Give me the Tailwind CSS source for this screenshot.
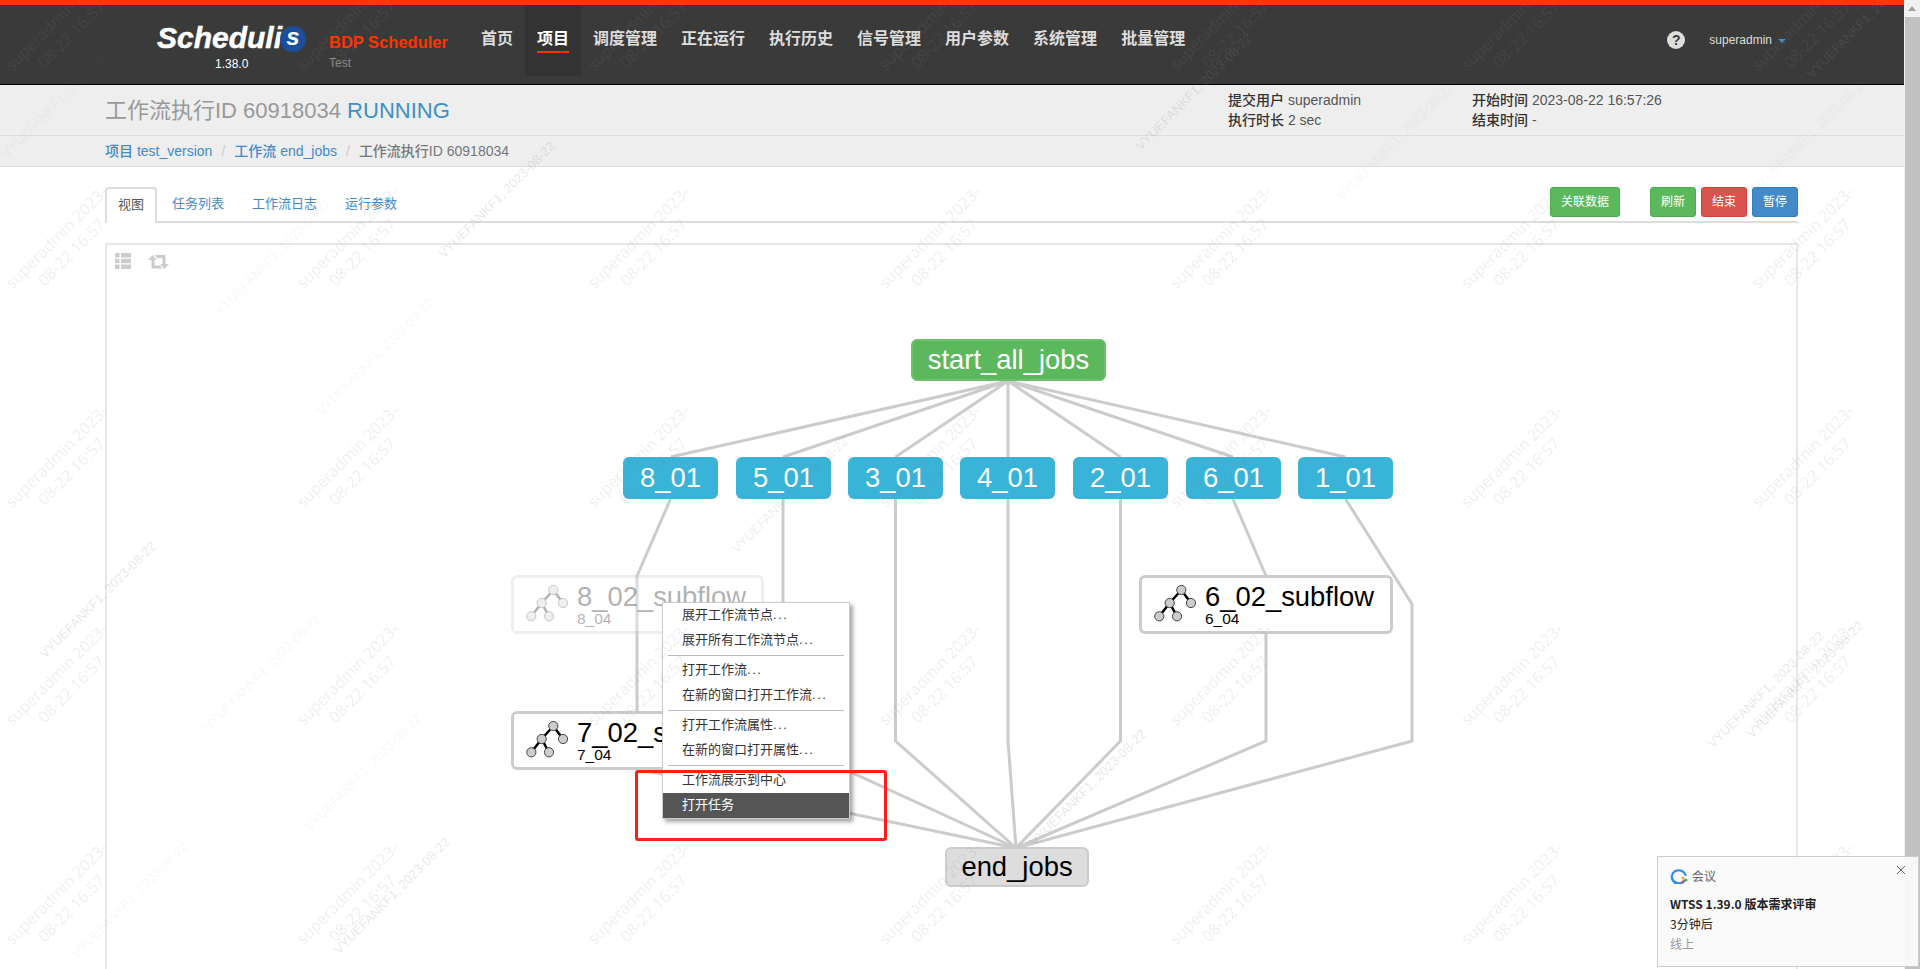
<!DOCTYPE html>
<html lang="zh-CN" class="h-[969px] overflow-hidden">

<head>
    <meta charset="UTF-8">
    <title>Schedulis</title>
    <script src="https://cdn.jsdelivr.net/npm/@tailwindcss/browser@4"></script>
</head>

<body class="relative flex h-[969px] w-[1920px] overflow-hidden bg-white font-['Liberation_Sans','Noto_Sans_CJK_SC',sans-serif] text-[14px] text-[#333]">
    <div class="relative h-[969px] w-[1904px] shrink-0 overflow-hidden">
        <!-- top nav -->
        <header class="flex h-[85px] items-start border-t-[5px] border-b border-t-[#ff3300] border-b-black bg-[#3a3a3a] pl-[157px]">
            <div class="relative h-[71px] w-[172px] shrink-0">
                <span class="absolute left-0 top-[15px] text-[30px] font-bold italic leading-[36px] text-white [-webkit-text-stroke:0.5px_white]">Scheduli</span>
                <span class="absolute left-[123px] top-[21px] flex size-[26px] items-center justify-center rounded-full bg-[#1b4f9c] pb-[4px] text-[24px] font-bold italic leading-none text-white">s</span>
                <span class="absolute left-[58px] top-[52px] text-[12px] leading-[14px] text-white">1.38.0</span>
            </div>
            <div class="w-[140px] shrink-0">
                <div class="mt-[27px] text-[16.5px] font-bold leading-[20px] text-[#ff3300]">BDP Scheduler</div>
                <div class="mt-[4px] text-[12px] leading-[14px] text-[#888]">Test</div>
            </div>
            <nav class="flex h-[71px] text-[16px] font-bold text-[#ddd]">
                <a class="px-3 pt-[23px] leading-[22px]">首页</a>
                <a class="bg-[#333] px-3 pt-[23px] leading-[22px] text-white"><span class="block border-b-2 border-[#ff3300] pb-[1px]">项目</span></a>
                <a class="px-3 pt-[23px] leading-[22px]">调度管理</a>
                <a class="px-3 pt-[23px] leading-[22px]">正在运行</a>
                <a class="px-3 pt-[23px] leading-[22px]">执行历史</a>
                <a class="px-3 pt-[23px] leading-[22px]">信号管理</a>
                <a class="px-3 pt-[23px] leading-[22px]">用户参数</a>
                <a class="px-3 pt-[23px] leading-[22px]">系统管理</a>
                <a class="px-3 pt-[23px] leading-[22px]">批量管理</a>
            </nav>
            <div class="ml-auto mr-[118px] flex h-[71px] items-center pb-[1px] text-[12px] text-[#ddd]">
                <span class="mr-[24px] flex size-[18px] items-center justify-center rounded-full bg-[#ddd] text-[14px] font-bold leading-none text-[#3a3a3a]">?</span>
                <span>superadmin</span>
                <span class="ml-[6px] mt-[2px] size-0 border-x-[4px] border-t-[4px] border-x-transparent border-t-[#428bca]"></span>
            </div>
        </header>

        <!-- flow header -->
        <section class="flex h-[51px] items-start border-b border-[#ddd] bg-[#eee] pl-[105px]">
            <h1 class="mt-[11px] w-[1123px] shrink-0 text-[22px] leading-[30px] text-[#999]">工作流执行ID 60918034 <span class="text-[#3a92c8]">RUNNING</span></h1>
            <div class="mt-[5px] w-[244px] shrink-0 leading-[20px] text-[#555]">
                <div><b class="font-medium text-[#333]">提交用户</b> superadmin</div>
                <div><b class="font-medium text-[#333]">执行时长</b> 2 sec</div>
            </div>
            <div class="mt-[5px] leading-[20px] text-[#555]">
                <div><b class="font-medium text-[#333]">开始时间</b> 2023-08-22 16:57:26</div>
                <div><b class="font-medium text-[#333]">结束时间</b> -</div>
            </div>
        </section>

        <!-- breadcrumb -->
        <section class="flex h-[31px] items-center gap-[9px] border-b border-[#ddd] bg-[#eee] pl-[105px] pb-[1px] leading-[20px]">
            <a class="text-[#428bca]"><b class="font-medium">项目</b> test_version</a>
            <span class="text-[#ccc]">/</span>
            <a class="text-[#428bca]"><b class="font-medium">工作流</b> end_jobs</a>
            <span class="text-[#ccc]">/</span>
            <span class="text-[#777]"><b class="font-medium">工作流执行ID</b> 60918034</span>
        </section>

        <!-- tabs -->
        <div class="ml-[105px] mt-[20px] flex h-[36px] w-[1693px] items-start border-b-2 border-[#ddd] text-[13px] text-[#428bca]">
            <a class="-mb-[2px] h-[36px] rounded-t-[4px] border-2 border-b-0 border-[#ddd] bg-white px-[11px] leading-[32px] text-[#555]">视图</a>
            <a class="ml-[2px] px-[13px] leading-[34px]">任务列表</a>
            <a class="ml-[2px] px-[13px] leading-[34px]">工作流日志</a>
            <a class="ml-[2px] px-[13px] leading-[34px]">运行参数</a>
            <div class="ml-auto flex h-[30px] text-[12px] text-white">
                <button class="mr-[30px] w-[70px] rounded-[3px] border border-[#4cae4c] bg-[#5cb85c]">关联数据</button>
                <button class="mr-[5px] w-[46px] rounded-[3px] border border-[#4cae4c] bg-[#5cb85c]">刷新</button>
                <button class="mr-[5px] w-[46px] rounded-[3px] border border-[#d43f3a] bg-[#d9534f]">结束</button>
                <button class="w-[46px] rounded-[3px] border border-[#357ebd] bg-[#428bca]">暂停</button>
            </div>
        </div>

        <!-- graph panel -->
        <div class="ml-[105px] mt-[20px] h-[726px] w-[1693px] border-2 border-b-0 border-[#e8e8e8] pl-[8px] pt-[8px]">
            <div class="flex items-center gap-[17px]">
                <svg class="h-[16px] w-[16px]" viewBox="0 0 16 16" fill="#ccc">
                    <path d="M0 0h4.5v4.4H0zM6 0h10v4.4H6zM0 5.8h4.5v4.4H0zM6 5.8h10v4.4H6zM0 11.6h4.5V16H0zM6 11.6h10V16H6z" />
                </svg>
                <svg class="mt-[1px] h-[14px] w-[21px]" viewBox="0 0 21 14" fill="#ccc">
                    <path d="M4.5 0 9 5H6.5v5.5H12l2.5 3H3.5V5H0zM6.500 0h11v9H21l-4.500 5L12 9h2.500V3H9z" />
                </svg>
            </div>
        </div>

        <!-- edges -->
        <svg class="absolute left-0 top-0" width="1904" height="969" fill="none" stroke="#ccc" stroke-width="3">
            <path d="M1008 381 670.500 457M1008 381 783 457M1008 381 895.500 457M1008 381V457M1008 381 1120.500 457M1008 381 1233 457M1008 381 1345.500 457" />
            <path d="M670.500 499 637 576V712" />
            <path d="M637 769 1016 848" />
            <path d="M783 499V741L1016 848" />
            <path d="M895.500 499V741L1016 848" />
            <path d="M1008 499V741L1016 848" />
            <path d="M1120.500 499V741L1016 848" />
            <path d="M1233 499 1266 576V741L1016 848" />
            <path d="M1345.500 499 1412 604V741L1016 848" />
        </svg>

        <!-- nodes -->
        <div class="absolute left-[911px] top-[339px] flex h-[42px] w-[195px] items-center justify-center rounded-[6px] border-2 border-[#6cc06c] bg-[#5cb85c] text-[27.4px] text-white">start_all_jobs</div>
        <div class="absolute left-[623px] top-[457px] flex h-[42px] w-[95px] items-center justify-center rounded-[6px] bg-[#39b3d7] text-[27.4px] text-white">8_01</div>
        <div class="absolute left-[736px] top-[457px] flex h-[42px] w-[95px] items-center justify-center rounded-[6px] bg-[#39b3d7] text-[27.4px] text-white">5_01</div>
        <div class="absolute left-[848px] top-[457px] flex h-[42px] w-[95px] items-center justify-center rounded-[6px] bg-[#39b3d7] text-[27.4px] text-white">3_01</div>
        <div class="absolute left-[960px] top-[457px] flex h-[42px] w-[95px] items-center justify-center rounded-[6px] bg-[#39b3d7] text-[27.4px] text-white">4_01</div>
        <div class="absolute left-[1073px] top-[457px] flex h-[42px] w-[95px] items-center justify-center rounded-[6px] bg-[#39b3d7] text-[27.4px] text-white">2_01</div>
        <div class="absolute left-[1186px] top-[457px] flex h-[42px] w-[95px] items-center justify-center rounded-[6px] bg-[#39b3d7] text-[27.4px] text-white">6_01</div>
        <div class="absolute left-[1298px] top-[457px] flex h-[42px] w-[95px] items-center justify-center rounded-[6px] bg-[#39b3d7] text-[27.4px] text-white">1_01</div>

        <div class="absolute left-[511px] top-[575px] h-[59px] w-[253px] rounded-[6px] border-[3px] border-[#ccc] bg-white text-black opacity-30">
            <svg class="absolute left-[9px] top-[4px]" width="50" height="42" viewBox="-3 -3 50 42" stroke="#000" stroke-width="2.500">
                <path d="M27.300 5 37 18M27.300 5 15.700 18M15.700 18 5.300 31.300M15.700 18 23 31.300" fill="none" />
                <g fill="#ccc" stroke="#444" stroke-width="1"><circle cx="27.300" cy="5" r="4.600" /><circle cx="37" cy="18" r="4.600" /><circle cx="15.700" cy="18" r="4.600" /><circle cx="5.300" cy="31.300" r="4.600" /><circle cx="23" cy="31.300" r="4.600" /></g>
            </svg>
            <div class="absolute left-[63px] top-[3px] whitespace-nowrap text-[27.4px] leading-[32px]">8_02_subflow</div>
            <div class="absolute left-[63px] top-[32px] text-[15.500px] leading-[18px]">8_04</div>
        </div>
        <div class="absolute left-[511px] top-[711px] h-[59px] w-[253px] rounded-[6px] border-[3px] border-[#ccc] bg-white text-black">
            <svg class="absolute left-[9px] top-[4px]" width="50" height="42" viewBox="-3 -3 50 42" stroke="#000" stroke-width="2.500">
                <path d="M27.300 5 37 18M27.300 5 15.700 18M15.700 18 5.300 31.300M15.700 18 23 31.300" fill="none" />
                <g fill="#ccc" stroke="#444" stroke-width="1"><circle cx="27.300" cy="5" r="4.600" /><circle cx="37" cy="18" r="4.600" /><circle cx="15.700" cy="18" r="4.600" /><circle cx="5.300" cy="31.300" r="4.600" /><circle cx="23" cy="31.300" r="4.600" /></g>
            </svg>
            <div class="absolute left-[63px] top-[3px] whitespace-nowrap text-[27.4px] leading-[32px]">7_02_subflow</div>
            <div class="absolute left-[63px] top-[32px] text-[15.500px] leading-[18px]">7_04</div>
        </div>
        <div class="absolute left-[1139px] top-[575px] h-[59px] w-[254px] rounded-[6px] border-[3px] border-[#ccc] bg-white text-black">
            <svg class="absolute left-[9px] top-[4px]" width="50" height="42" viewBox="-3 -3 50 42" stroke="#000" stroke-width="2.500">
                <path d="M27.300 5 37 18M27.300 5 15.700 18M15.700 18 5.300 31.300M15.700 18 23 31.300" fill="none" />
                <g fill="#ccc" stroke="#444" stroke-width="1"><circle cx="27.300" cy="5" r="4.600" /><circle cx="37" cy="18" r="4.600" /><circle cx="15.700" cy="18" r="4.600" /><circle cx="5.300" cy="31.300" r="4.600" /><circle cx="23" cy="31.300" r="4.600" /></g>
            </svg>
            <div class="absolute left-[63px] top-[3px] whitespace-nowrap text-[27.4px] leading-[32px]">6_02_subflow</div>
            <div class="absolute left-[63px] top-[32px] text-[15.500px] leading-[18px]">6_04</div>
        </div>
        <div class="absolute left-[945px] top-[847px] flex h-[40px] w-[144px] items-center justify-center rounded-[6px] border-2 border-[#ccc] bg-[#ddd] text-[27.4px] text-black">end_jobs</div>

        <!-- context menu -->
        <ul class="absolute left-[662px] top-[602px] flex w-[188px] flex-col border border-[#ccc] bg-white text-[13px] text-[#333] shadow-[3px_3px_4px_rgba(0,0,0,0.35)]">
            <li class="h-[25px] pl-[19px] leading-[23px]">展开工作流节点<span class="tracking-[1.5px]">...</span></li>
            <li class="h-[25px] pl-[19px] leading-[23px]">展开所有工作流节点<span class="tracking-[1.5px]">...</span></li>
            <li class="mx-[5px] my-[2px] h-px bg-[#bbb]"></li>
            <li class="h-[25px] pl-[19px] leading-[23px]">打开工作流<span class="tracking-[1.5px]">...</span></li>
            <li class="h-[25px] pl-[19px] leading-[23px]">在新的窗口打开工作流<span class="tracking-[1.5px]">...</span></li>
            <li class="mx-[5px] my-[2px] h-px bg-[#bbb]"></li>
            <li class="h-[25px] pl-[19px] leading-[23px]">打开工作流属性<span class="tracking-[1.5px]">...</span></li>
            <li class="h-[25px] pl-[19px] leading-[23px]">在新的窗口打开属性<span class="tracking-[1.5px]">...</span></li>
            <li class="mx-[5px] my-[2px] h-px bg-[#bbb]"></li>
            <li class="h-[25px] pl-[19px] leading-[23px]">工作流展示到中心</li>
            <li class="h-[25px] bg-[#555] pl-[19px] leading-[23px] text-white">打开任务</li>
        </ul>

        <!-- red annotation -->
        <div class="absolute left-[635px] top-[770px] h-[71px] w-[252px] rounded-[3px] border-[3px] border-[#ff1e14]"></div>
    </div>

    <!-- scrollbar -->
    <div class="flex w-4 shrink-0 flex-col bg-[#f1f1f1]">
        <div class="flex h-[17px] items-center justify-center">
            <span class="size-0 border-x-[4px] border-b-[5px] border-x-transparent border-b-[#a3a3a3]"></span>
        </div>
        <div class="ml-px flex-1 bg-[#c1c1c1]"></div>
    </div>

    <!-- watermarks -->
    <div id="marks" class="pointer-events-none absolute inset-0 overflow-hidden"></div>

    <!-- meeting notification -->
    <div class="absolute left-[1657px] top-[856px] h-[111px] w-[262px] border border-[#ccc] bg-[#fafafa]/95 pl-[12px] pt-[9px] text-[12px] text-[#222] font-['Noto_Sans_CJK_SC','Liberation_Sans',sans-serif]">
        <div class="flex h-[20px] items-center text-[#666]">
            <svg class="mr-[4px]" width="18" height="16" viewBox="0 0 18 16" fill="none">
                <path d="M14.500 12.500A7 6.500 0 1 1 15.500 7" stroke="#2a8cf0" stroke-width="2.200" stroke-linecap="round" />
                <path d="M6 13.500 4 15.500" stroke="#2a8cf0" stroke-width="2" />
                <circle cx="13" cy="10" r="1.500" fill="#f5a623" />
                <circle cx="16" cy="12" r="1.500" fill="#3bb54a" />
                <circle cx="13" cy="14" r="1.500" fill="#e8504a" />
            </svg>
            会议
        </div>
        <div class="mt-[8px] font-bold leading-[20px] text-[#222]">WTSS 1.39.0 版本需求评审</div>
        <div class="leading-[20px]">3分钟后</div>
        <div class="leading-[20px] text-[#999]">线上</div>
        <svg class="absolute right-[12px] top-[8px]" width="10" height="10" viewBox="0 0 10 10" stroke="#666" stroke-width="1">
            <path d="M1 1 9 9M9 1 1 9" />
        </svg>
    </div>

    <script>
        const marks = document.getElementById("marks");

        function addMark(x, y, className, html, alpha) {
            const el = document.createElement("div");
            el.className = className;
            el.innerHTML = html;
            el.style.left = x + "px";
            el.style.top = y + "px";
            if (alpha) el.style.opacity = alpha;
            marks.appendChild(el);
        }

        // big user/time stamp, tiled
        for (let row = 0; row < 5; row++) {
            for (let col = 0; col < 7; col++) {
                addMark(63.5 + col * 291, 26.5 + row * 218.5,
                    "absolute w-[170px] -translate-x-1/2 -translate-y-1/2 -rotate-45 text-center font-['Open_Sans',sans-serif] text-[16px] leading-[21px] text-[#888]/15",
                    "superadmin 2023-<br>08-22 16:57");
            }
        }

        // smaller second stamp, scattered
        const scattered = [
            [98, 600, 1], [392, 896, 1], [497, 200, 1], [1194, 92, 1], [1865, 20, 1],
            [1088, 788, 1], [1766, 690, 1], [1805, 680, 1], [790, 495, 0.7],
            [273, 257, 0.3], [375, 357, 0.3], [262, 673, 0.3], [363, 773, 0.3],
            [1395, 142, 0.3], [1810, 135, 0.3], [60, 100, 0.3], [130, 900, 0.3]
        ];
        scattered.forEach(([x, y, alpha]) => {
            addMark(x, y,
                "absolute w-[170px] -translate-x-1/2 -translate-y-1/2 -rotate-45 whitespace-nowrap text-center font-['Liberation_Sans',sans-serif] text-[13px] leading-[14px] text-[#888]/20",
                "VYUEFANKF1, 2023-08-22", alpha);
        });
    </script>
</body>

</html>
